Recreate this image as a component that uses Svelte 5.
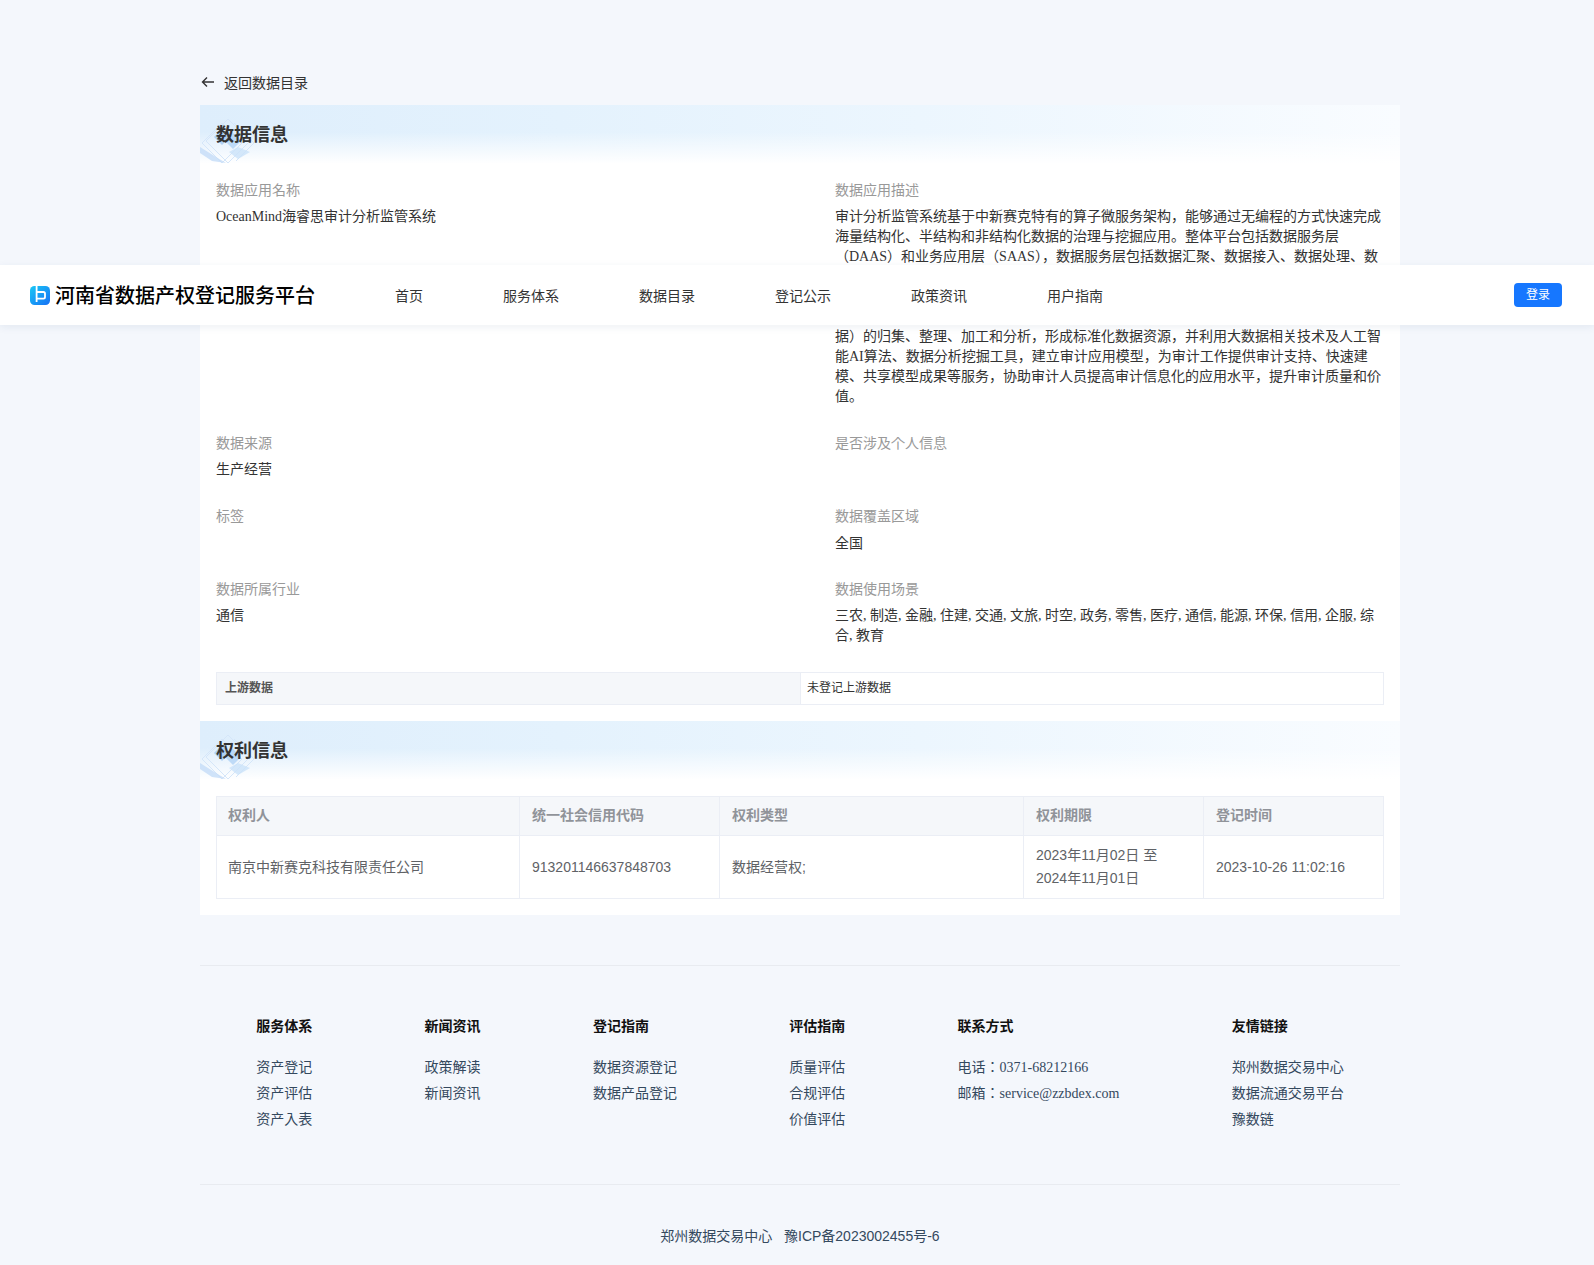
<script>
  const navItems = ['首页', '服务体系', '数据目录', '登记公示', '政策资讯', '用户指南'];

  const columns = [
    { title: '权利人', width: 303 },
    { title: '统一社会信用代码', width: 200 },
    { title: '权利类型', width: 304 },
    { title: '权利期限', width: 180 },
    { title: '登记时间', width: 180 }
  ];

  const footerCols = [
    { title: '服务体系', links: ['资产登记', '资产评估', '资产入表'] },
    { title: '新闻资讯', links: ['政策解读', '新闻资讯'] },
    { title: '登记指南', links: ['数据资源登记', '数据产品登记'] },
    { title: '评估指南', links: ['质量评估', '合规评估', '价值评估'] },
    { title: '联系方式', links: ['电话：0371-68212166', '邮箱：service@zzbdex.com'] },
    { title: '友情链接', links: ['郑州数据交易中心', '数据流通交易平台', '豫数链'] }
  ];

  const description =
    '审计分析监管系统基于中新赛克特有的算子微服务架构，能够通过无编程的方式快速完成海量结构化、半结构和非结构化数据的治理与挖掘应用。整体平台包括数据服务层（DAAS）和业务应用层（SAAS），数据服务层包括数据汇聚、数据接入、数据处理、数据治理、数据建模和数据共享等功能模块，业务应用层包括审计作业、审计分析、审计监管等功能模块，并支持多源异构数据的统一管理与质量校验等。系统面向审计业务场景，实现对被审计单位各类业务数据和财务数据（包括结构化数据、半结构化和非结构化数据）的归集、整理、加工和分析，形成标准化数据资源，并利用大数据相关技术及人工智能AI算法、数据分析挖掘工具，建立审计应用模型，为审计工作提供审计支持、快速建模、共享模型成果等服务，协助审计人员提高审计信息化的应用水平，提升审计质量和价值。';
</script>

{#snippet sectionHead(title)}
  <div class="section-head">
    <svg class="deco" width="60" height="60" viewBox="0 0 60 60" aria-hidden="true">
      <g fill="none" stroke="#d5e6f9" stroke-width="1">
        <path d="M28 14 L50 36 L28 58 L6 36 Z" />
        <path d="M22 18 L42 38 L22 58 L2 38 Z" />
        <path d="M34 18 L54 38 L36 56" />
      </g>
      <path d="M22 24 L30 32 L22 40 L14 32 Z" fill="#9cc6f2" opacity="0.75" />
      <path d="M33 28 L41 36 L33 44 L25 36 Z" fill="#a9cef4" opacity="0.7" />
      <path d="M38 42 L50 47 L38 54 L29 47 Z" fill="#cbe2f9" opacity="0.8" />
      <path d="M0 42 L16 52 L26 58 L12 56 L0 48 Z" fill="#c4dcf7" opacity="0.8" />
    </svg>
    <h2>{title}</h2>
  </div>
{/snippet}

<header class="topbar">
  <div class="brand">
    <svg width="20" height="19" viewBox="0 0 20 19" aria-hidden="true">
      <defs>
        <linearGradient id="logo-fill" x1="0" y1="0" x2="1" y2="1">
          <stop offset="0" stop-color="#19c8f5" />
          <stop offset="1" stop-color="#1670f5" />
        </linearGradient>
      </defs>
      <rect width="20" height="19" rx="4.5" fill="url(#logo-fill)" />
      <path d="M6.6 0 V16 M6.6 6 H13.4 Q15 6 15 7.6 V11 Q15 12.6 13.4 12.6 H6.6" fill="none" stroke="#fff" stroke-width="1.8" />
    </svg>
    <span>河南省数据产权登记服务平台</span>
  </div>
  <nav>
    {#each navItems as item}
      <a href="#top">{item}</a>
    {/each}
  </nav>
  <button class="login">登录</button>
</header>

<div class="page">
  <a class="back" href="#top">
    <svg width="14" height="12" viewBox="0 0 14 12" aria-hidden="true">
      <path d="M13 6 H1.5 M6 1.5 L1.5 6 L6 10.5" fill="none" stroke="#333" stroke-width="1.4" />
    </svg>
    返回数据目录
  </a>

  <section class="card">
    {@render sectionHead('数据信息')}
    <div class="fields">
      <div class="field">
        <div class="label">数据应用名称</div>
        <div class="value">OceanMind海睿思审计分析监管系统</div>
      </div>
      <div class="field">
        <div class="label">数据应用描述</div>
        <div class="value">{description}</div>
      </div>
      <div class="field">
        <div class="label">数据来源</div>
        <div class="value">生产经营</div>
      </div>
      <div class="field">
        <div class="label">是否涉及个人信息</div>
      </div>
      <div class="field">
        <div class="label">标签</div>
      </div>
      <div class="field">
        <div class="label">数据覆盖区域</div>
        <div class="value region">全国</div>
      </div>
      <div class="field">
        <div class="label">数据所属行业</div>
        <div class="value">通信</div>
      </div>
      <div class="field">
        <div class="label">数据使用场景</div>
        <div class="value">三农, 制造, 金融, 住建, 交通, 文旅, 时空, 政务, 零售, 医疗, 通信, 能源, 环保, 信用, 企服, 综合, 教育</div>
      </div>
    </div>

    <div class="upstream">
      <div class="up-label">上游数据</div>
      <div class="up-value">未登记上游数据</div>
    </div>

    {@render sectionHead('权利信息')}
    <div class="table-wrap">
      <table>
        <colgroup>
          {#each columns as col}
            <col style="width: {col.width}px" />
          {/each}
        </colgroup>
        <thead>
          <tr>
            {#each columns as col}
              <th>{col.title}</th>
            {/each}
          </tr>
        </thead>
        <tbody>
          <tr>
            <td>南京中新赛克科技有限责任公司</td>
            <td>913201146637848703</td>
            <td>数据经营权;</td>
            <td>2023年11月02日 至 2024年11月01日</td>
            <td>2023-10-26 11:02:16</td>
          </tr>
        </tbody>
      </table>
    </div>
  </section>

  <footer>
    <div class="footer-cols">
      {#each footerCols as col}
        <div class="footer-col">
          <h3>{col.title}</h3>
          {#each col.links as link}
            <div class="footer-link">{link}</div>
          {/each}
        </div>
      {/each}
    </div>
    <div class="copyright">郑州数据交易中心&nbsp;&nbsp; 豫ICP备2023002455号-6</div>
  </footer>
</div>

<style>
  :global(body) {
    margin: 0;
    background: #f4f7fc;
    font-family: "Liberation Serif", "Noto Sans CJK JP", serif;
    font-size: 14px;
    color: #333;
  }

  .topbar {
    position: absolute;
    top: 265px;
    left: 0;
    right: 0;
    z-index: 10;
    height: 60px;
    display: flex;
    align-items: center;
    padding: 0 32px 0 30px;
    background: #fff;
    box-shadow: 0 2px 8px rgba(30, 60, 120, 0.08);
    font-family: "Liberation Sans", "Noto Sans CJK JP", sans-serif;
  }

  .brand {
    display: flex;
    align-items: center;
    gap: 5px;
    width: 365px;
    font-size: 20px;
    font-weight: 500;
    color: #000;
  }

  .brand span {
    margin-bottom: 2px;
  }

  nav {
    display: flex;
    gap: 80px;
    flex: 1;
  }

  nav a {
    color: #333;
    text-decoration: none;
    font-size: 14px;
  }

  .login {
    width: 48px;
    height: 24px;
    padding: 0 0 4px;
    border: none;
    border-radius: 4px;
    background: #1677ff;
    color: #fff;
    font-family: inherit;
    font-size: 12px;
  }

  .page {
    width: 1200px;
    margin-left: 200px;
    padding-top: 72px;
  }

  .back {
    display: flex;
    align-items: center;
    gap: 9px;
    height: 20px;
    margin-bottom: 13px;
    color: #333;
    text-decoration: none;
    font-family: "Liberation Sans", "Noto Sans CJK JP", sans-serif;
  }

  .back svg {
    margin-left: 1px;
  }

  .card {
    background: #fff;
    padding-bottom: 16px;
  }

  .section-head {
    position: relative;
    height: 60px;
    display: flex;
    align-items: center;
    padding: 0 0 4px 16px;
    box-sizing: border-box;
    background:
      linear-gradient(to bottom, rgba(255, 255, 255, 0) 45%, #fff 98%),
      linear-gradient(to right, #deeefc, #e4f2fd 30%, #ecf6fe 60%, #f9fcff);
    overflow: hidden;
  }

  .deco {
    position: absolute;
    left: 0;
    top: 0;
    filter: blur(0.6px);
  }

  h2 {
    position: relative;
    margin: 0;
    font-size: 18px;
    font-weight: 700;
    color: #333;
    font-family: "Liberation Sans", "Noto Sans CJK JP", sans-serif;
  }

  .fields {
    display: grid;
    grid-template-columns: 619px 549px;
    row-gap: 27px;
    padding: 16px 16px 0;
  }

  .label {
    line-height: 20px;
    color: #999;
  }

  .value {
    margin-top: 6px;
    line-height: 20px;
    color: #333;
  }

  .value.region {
    margin-top: 7px;
    margin-bottom: -1px;
  }

  .upstream {
    display: flex;
    height: 33px;
    margin: 26px 16px 16px;
    box-sizing: border-box;
    border: 1px solid #ebeef5;
    font-size: 12px;
    line-height: 31px;
  }

  .up-label {
    width: 584px;
    box-sizing: border-box;
    padding-left: 8px;
    background: #f5f7fa;
    border-right: 1px solid #ebeef5;
    font-weight: 700;
    color: #555;
  }

  .up-value {
    padding-left: 6px;
    color: #333;
  }

  .table-wrap {
    padding: 15px 16px 0;
  }

  table {
    width: 1167px;
    table-layout: fixed;
    border-collapse: collapse;
    font-family: "Liberation Sans", "Noto Sans CJK JP", sans-serif;
    font-size: 14px;
  }

  th, td {
    border: 1px solid #ebeef5;
    padding: 8px 12px;
    line-height: 23px;
    text-align: left;
  }

  th {
    padding: 7px 12px 8px;
    background: #f5f7fa;
    color: #909399;
    font-weight: 700;
  }

  td {
    color: #606266;
  }

  th:first-child, td:first-child {
    padding-left: 11px;
  }

  footer {
    margin-top: 50px;
    border-top: 1px solid #e8ebf0;
    color: #34495e;
  }

  .footer-cols {
    display: flex;
    justify-content: space-around;
    height: 219px;
    box-sizing: border-box;
    padding-top: 50px;
    border-bottom: 1px solid #e8ebf0;
  }

  h3 {
    margin: 0 0 19px;
    font-size: 14px;
    line-height: 20px;
    font-weight: 700;
    color: #111;
    font-family: "Liberation Sans", "Noto Sans CJK JP", sans-serif;
  }

  .footer-link {
    line-height: 26px;
  }

  .copyright {
    margin-top: 41px;
    line-height: 20px;
    text-align: center;
    font-family: "Liberation Sans", "Noto Sans CJK JP", sans-serif;
  }
</style>
